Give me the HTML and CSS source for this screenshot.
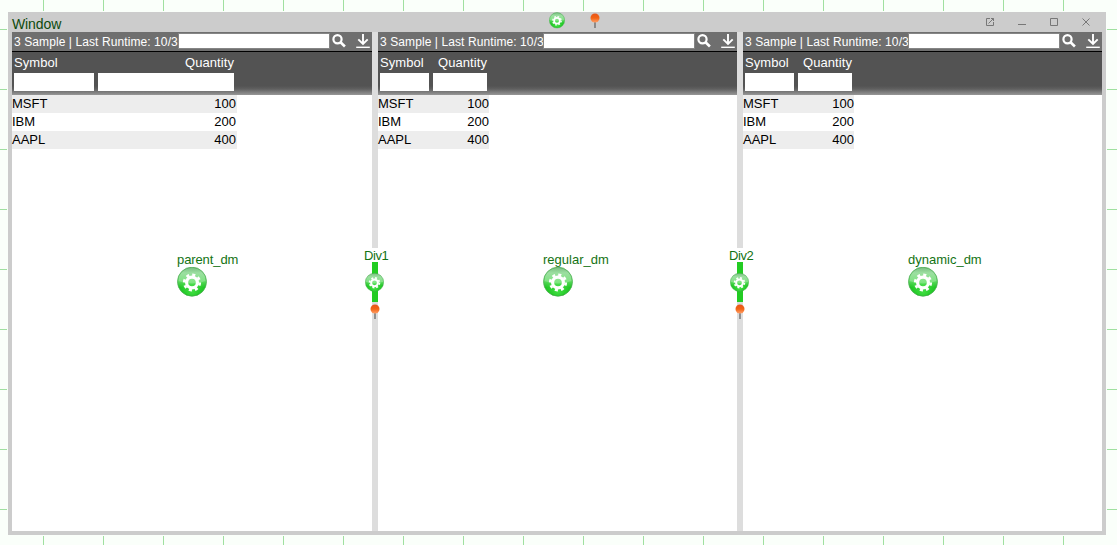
FILE: index.html
```html
<!DOCTYPE html>
<html lang="en">
<head>
<meta charset="utf-8">
<title>Window</title>
<link rel="stylesheet" href="styles.css">
</head>
<body>
<svg class="defs" width="0" height="0">
  <defs>
    <linearGradient id="ball" x1="0" y1="0" x2="0" y2="1">
      <stop offset="0" stop-color="#62b06a"/><stop offset=".2" stop-color="#86d88c"/><stop offset=".48" stop-color="#5cda5f"/><stop offset=".7" stop-color="#1ec422"/><stop offset="1" stop-color="#0cb810"/>
    </linearGradient>
    <radialGradient id="glow" cx=".5" cy=".85" r=".5">
      <stop offset="0" stop-color="#6cff6c" stop-opacity=".5"/><stop offset="1" stop-color="#6cff6c" stop-opacity="0"/>
    </radialGradient>
    <linearGradient id="gloss" x1="0" y1="0" x2="0" y2="1">
      <stop offset="0" stop-color="#fff" stop-opacity=".15"/><stop offset="1" stop-color="#fff" stop-opacity=".25"/>
    </linearGradient>
    <linearGradient id="orange" x1="0" y1="0" x2="0" y2="1">
      <stop offset="0" stop-color="#e8551a"/><stop offset=".5" stop-color="#f26414"/><stop offset="1" stop-color="#ffa06a"/>
    </linearGradient>
  </defs>
  <symbol id="gear" viewBox="0 0 30 30">
    <circle cx="15" cy="14.700" r="14.5" fill="url(#ball)" stroke="#4fae55" stroke-width=".8"/>
    <circle cx="15" cy="14.700" r="14" fill="url(#glow)"/>
    <path d="M1.500 14a13.500 13 0 0 1 27 0q-13.500 5-27 0z" fill="url(#gloss)"/>
    <circle cx="15" cy="15.500" r="5.400" fill="none" stroke="#fff" stroke-width="3.200"/>
    <circle cx="15" cy="15.500" r="7.800" fill="none" stroke="#fff" stroke-width="2.600" stroke-dasharray="3.060 3.066"/>
  </symbol>
  <symbol id="pin" viewBox="0 0 10 16">
    <path d="M5 8v7" stroke="#666" stroke-width="1.300"/>
    <circle cx="5" cy="5" r="4.500" fill="url(#orange)"/>
  </symbol>
  <symbol id="search" viewBox="0 0 14 14">
    <circle cx="5.500" cy="5.300" r="4.100" fill="none" stroke="#fff" stroke-width="2.200"/>
    <path d="M8.500 8.300l4.400 4.200" stroke="#fff" stroke-width="2.600"/>
  </symbol>
  <symbol id="download" viewBox="0 0 14 14">
    <path d="M7 0v10M2.300 5.300L7 10l4.700-4.700" fill="none" stroke="#fff" stroke-width="1.900"/>
    <path d="M.2 13.300h13.600" stroke="#fff" stroke-width="1.400"/>
  </symbol>
</svg>

<div class="desktop">
  <div class="window">
    <header class="titlebar">
      <span class="title">Window</span>
      <svg class="ctl" viewBox="0 0 10 10"><path d="M5 1.500H1.500v7h7V5M3.500 6.500l5-5M6 1.500h2.500V4" /></svg>
      <svg class="ctl" viewBox="0 0 10 10"><path d="M1 7.500h8"/></svg>
      <svg class="ctl" viewBox="0 0 10 10"><path d="M1.500 1.500h7v7h-7z"/></svg>
      <svg class="ctl" viewBox="0 0 10 10"><path d="M1.500 1.500l7 7M8.500 1.500l-7 7"/></svg>
    </header>
    <div class="panes">
      <section class="pane wide">
        <div class="toolbar"><span class="status">3 Sample | Last Runtime: 10/3</span><span class="query"></span><svg class="tool"><use href="#search"/></svg><svg class="tool down"><use href="#download"/></svg></div>
        <div class="head"><div class="col">Symbol<span class="filter"></span></div><div class="col num">Quantity<span class="filter"></span></div></div>
        <div class="row"><span>MSFT</span><span>100</span></div>
        <div class="row"><span>IBM</span><span>200</span></div>
        <div class="row"><span>AAPL</span><span>400</span></div>
      </section>
      <div class="divider"></div>
      <section class="pane">
        <div class="toolbar"><span class="status">3 Sample | Last Runtime: 10/3</span><span class="query"></span><svg class="tool"><use href="#search"/></svg><svg class="tool down"><use href="#download"/></svg></div>
        <div class="head"><div class="col">Symbol<span class="filter"></span></div><div class="col num">Quantity<span class="filter"></span></div></div>
        <div class="row"><span>MSFT</span><span>100</span></div>
        <div class="row"><span>IBM</span><span>200</span></div>
        <div class="row"><span>AAPL</span><span>400</span></div>
      </section>
      <div class="divider"></div>
      <section class="pane">
        <div class="toolbar"><span class="status">3 Sample | Last Runtime: 10/3</span><span class="query"></span><svg class="tool"><use href="#search"/></svg><svg class="tool down"><use href="#download"/></svg></div>
        <div class="head"><div class="col">Symbol<span class="filter"></span></div><div class="col num">Quantity<span class="filter"></span></div></div>
        <div class="row"><span>MSFT</span><span>100</span></div>
        <div class="row"><span>IBM</span><span>200</span></div>
        <div class="row"><span>AAPL</span><span>400</span></div>
      </section>
    </div>
  </div>

  <svg class="over window-gear"><use href="#gear"/></svg>
  <svg class="over pin window-pin"><use href="#pin"/></svg>

  <div class="over node parent"><span>parent_dm</span><svg><use href="#gear"/></svg></div>
  <div class="over node regular"><span>regular_dm</span><svg><use href="#gear"/></svg></div>
  <div class="over node dynamic"><span>dynamic_dm</span><svg><use href="#gear"/></svg></div>

  <div class="over split first"><span class="name">Div1</span><div class="bar"><svg class="knob"><use href="#gear"/></svg></div><svg class="pin"><use href="#pin"/></svg></div>
  <div class="over split second"><span class="name">Div2</span><div class="bar"><svg class="knob"><use href="#gear"/></svg></div><svg class="pin"><use href="#pin"/></svg></div>
</div>
</body>
</html>
```

FILE: styles.css
```css
* { box-sizing: border-box; }
body { margin: 0; overflow: hidden; font: 13px/18px "Liberation Sans", Arial, sans-serif; color: #000; }
svg { display: block; flex: none; }
.defs { position: absolute; }

.desktop {
  position: relative;
  width: 1117px;
  height: 545px;
  padding: 11px 10px 9px 7px;
  background-color: #fafffa;
  background-image:
    linear-gradient(90deg, #a0e0a0 1px, transparent 1px),
    linear-gradient(#a0e0a0 1px, transparent 1px);
  background-size: 60px 60px;
  background-position: 43px 0, 0 29px;
}
.window {
  width: 1100px;
  height: 525px;
  padding: 0 4px 4px;
  border: 1px solid #fafffa;
  background: #ccc;
  background-clip: padding-box;
}

.titlebar { display: flex; align-items: center; gap: 22px; height: 20px; padding-right: 11px; }
.title { flex: 1; padding-top: 4px; font-size: 14px; line-height: 16px; letter-spacing: -.1px; color: #0c4a0c; }
.ctl { width: 10px; height: 10px; fill: none; stroke: #777; stroke-width: 1; }

.panes { display: flex; height: 499px; background: #fff; }
.pane { width: 359px; }
.pane.wide { width: 360px; }
.divider { width: 6px; background: #ddd; }

.toolbar { display: flex; height: 20px; background: #6f6f6f; border-bottom: 1px solid #000; }
.status { width: 165px; padding-left: 2px; white-space: nowrap; font-size: 12px; line-height: 20px; letter-spacing: .09px; color: #fff; }
.wide .status { width: 166px; }
.query { position: relative; width: 152px; height: 16px; margin-top: 1px; background: #fff; border: 1px solid #858585; }
.tool { width: 14px; height: 14px; margin: 2px 0 0 2px; }
.tool.down { margin-left: 10px; }

.head { display: flex; height: 43px; gap: 4px; padding: 2px 2px 0; color: #fff; background: linear-gradient(#535353 0, #535353 34px, #606060 37px, #979797 43px); }
.col { width: 49px; white-space: nowrap; line-height: 17px; letter-spacing: .08px; }
.col.num { width: 54px; text-align: right; }
.wide .col { width: 80px; }
.wide .col.num { width: 136px; }
.filter { display: block; height: 18px; margin-top: 2px; background: #fff; }

.row { display: flex; justify-content: space-between; width: 111px; height: 18px; line-height: 17px; }
.wide .row { width: 225px; }
.wide .row span:last-child { padding-right: 1px; }
.row:nth-child(odd) { background: #ededed; }

.over { position: absolute; }
.window-gear { left: 549px; top: 12px; width: 16px; height: 17px; }
.pin { width: 10px; height: 16px; }
.window-pin { left: 590px; top: 13px; }

.node { top: 251px; color: #137313; }
.node span { display: block; height: 16px; line-height: 18px; }
.node svg { width: 30px; height: 30px; }
.parent { left: 177px; }
.parent span { letter-spacing: -.1px; }
.regular { left: 543px; }
.dynamic { left: 908px; }

.split { top: 248px; display: grid; grid-template-rows: 14px 40px 16px; width: 26px; }
.first { left: 364px; }
.second { left: 729px; }
.name { justify-self: start; height: 14px; line-height: 15px; letter-spacing: -.4px; background: #fff; color: #137313; }
.bar { display: flex; align-items: center; justify-content: center; width: 6px; height: 40px; margin-left: 8px; background: #22cc22; }
.knob { width: 19px; height: 19px; margin-left: -1px; }
.split .pin { margin: 2px 0 0 5.500px; }
```
